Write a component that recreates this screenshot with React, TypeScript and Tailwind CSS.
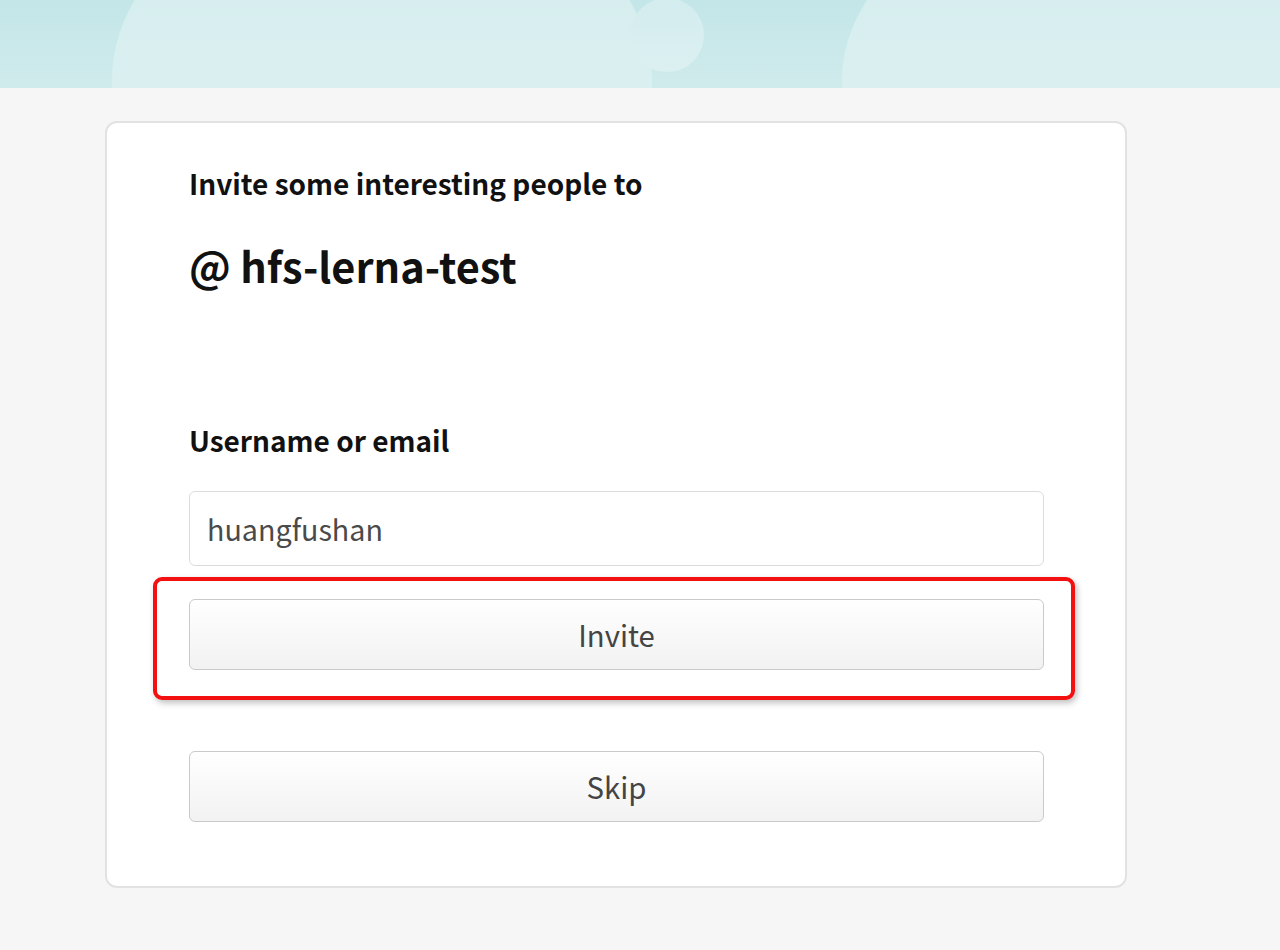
import React from "react";

export default function App() {
  return (
    <div
      className="w-[1280px] h-[950px] bg-[#f6f6f6] overflow-hidden"
      style={{ fontFamily: "'Noto Sans CJK SC', 'Noto Sans', sans-serif" }}
    >
      <div className="relative h-[88px] overflow-hidden bg-gradient-to-b from-[#c3e6e8] to-[#d0ebec]">
        <div className="absolute left-[112px] top-[-120px] w-[540px] h-[400px] rounded-[50%] bg-gradient-to-b from-[#d3ecee] to-[#e0f2f2]" />
        <div className="absolute left-[630px] top-[-2px] w-[74px] h-[74px] rounded-full bg-gradient-to-b from-[#d3ecee] to-[#dcf0f1]" />
        <div className="absolute left-[842px] top-[-120px] w-[600px] h-[400px] rounded-[50%] bg-gradient-to-b from-[#d3ecee] to-[#e0f2f2]" />
      </div>
      <div className="flex pt-[33px] pl-[105px]">
        <div className="flex flex-col w-[1022px] h-[767px] bg-white border-2 border-[#e2e2e2] rounded-[12px] px-[82px] pt-[40px]">
          <div className="text-[28px] leading-[40px] font-semibold text-[#111]">
            Invite some interesting people to
          </div>
          <div className="mt-[34px] text-[41.5px] leading-[56px] font-semibold text-[#111]">
            @ hfs-lerna-test
          </div>
          <div className="mt-[127px] text-[28px] leading-[40px] font-semibold text-[#111]">
            Username or email
          </div>
          <div className="mt-[31px] w-[855px] h-[75px] border border-[#dcdcdc] rounded-[6px] flex items-center pl-[17px] text-[28.7px] text-[#4a4a4a]">
            huangfushan
          </div>
          <div className="relative mt-[33px]">
            <div className="absolute left-[-36px] top-[-22px] w-[922px] h-[123px] border-[4px] border-[#f21010] rounded-[9px] shadow-[2px_3px_6px_rgba(0,0,0,0.25)] pointer-events-none" />
            <div className="w-[855px] h-[71px] border border-[#cacaca] rounded-[6px] bg-gradient-to-b from-white to-[#f2f2f2] flex items-center justify-center text-[29.3px] text-[#444]">
              Invite
            </div>
          </div>
          <div className="mt-[81px] w-[855px] h-[71px] border border-[#cacaca] rounded-[6px] bg-gradient-to-b from-white to-[#f2f2f2] flex items-center justify-center text-[29.3px] text-[#444]">
            Skip
          </div>
        </div>
      </div>
    </div>
  );
}
